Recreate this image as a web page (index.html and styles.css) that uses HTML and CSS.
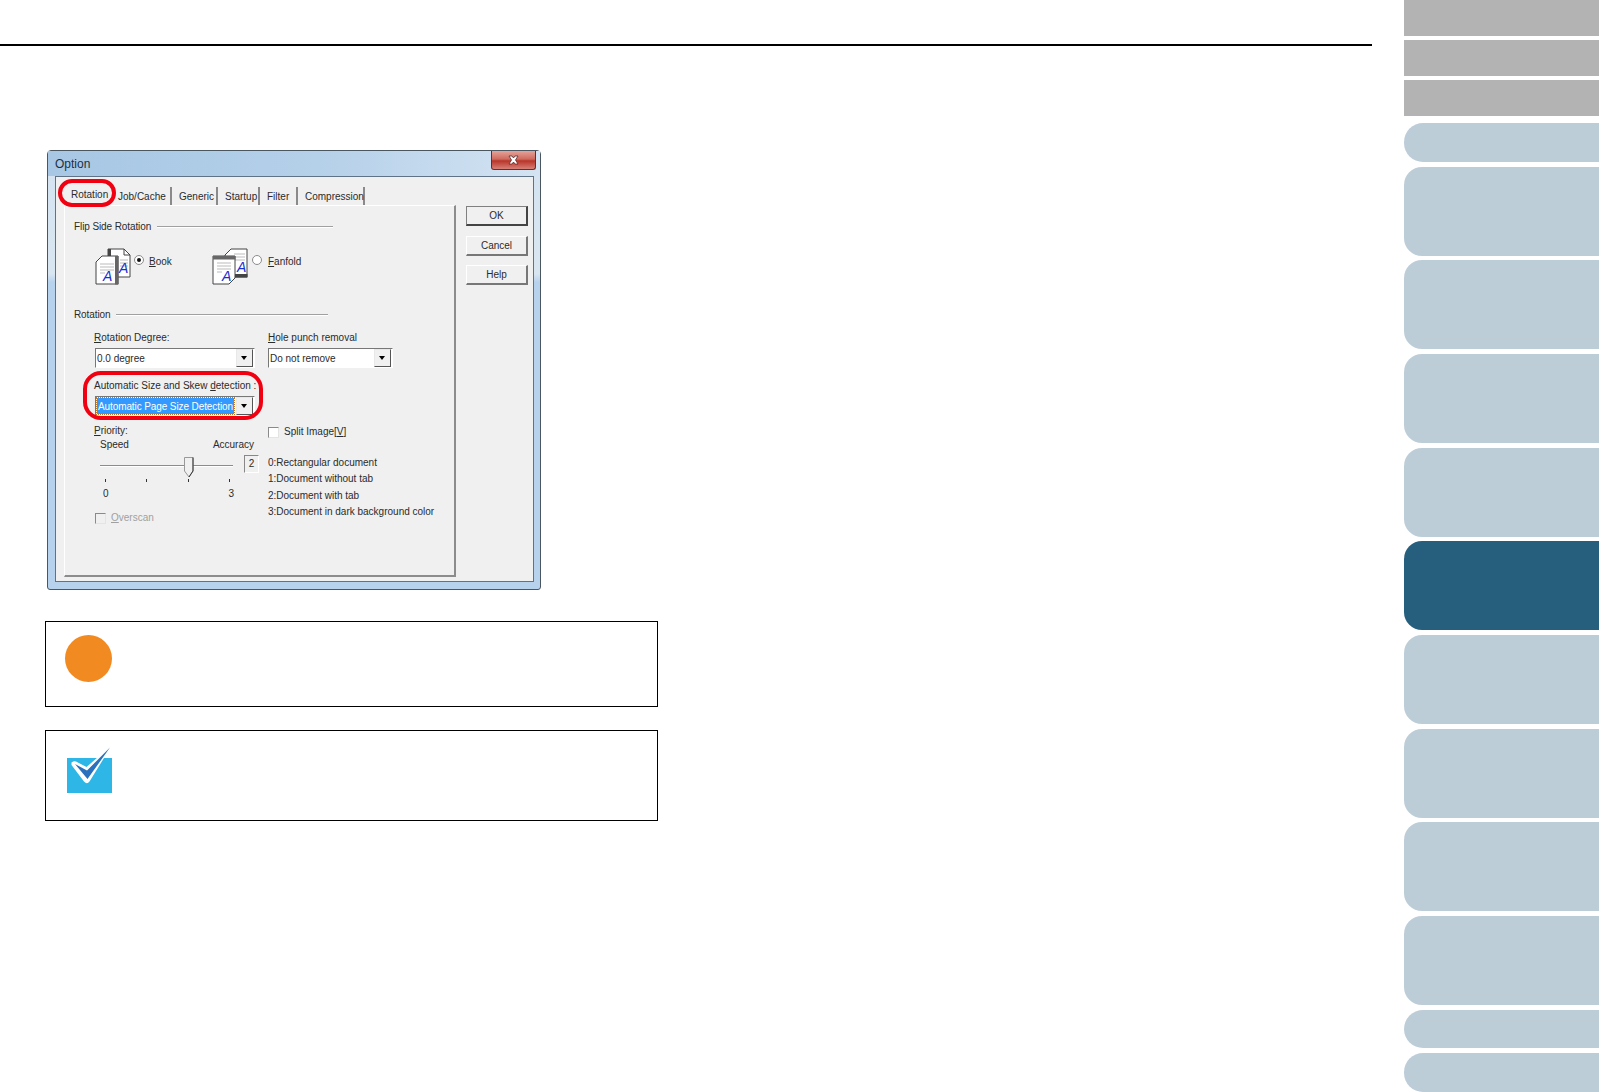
FILE: index.html
```html
<!DOCTYPE html>
<html lang="en">
<head>
    <meta charset="UTF-8">
    <meta name="viewport" content="width=device-width, initial-scale=1.0">
    <title>Option</title>
    <link rel="stylesheet" href="styles.css">
</head>
<body>
    <div class="page">
        <main class="content">
            <div class="top-rule"></div>

            <div class="dialog">
                <div class="title-bar">
                    <span class="title">Option</span>
                    <span class="close-btn">
                        <svg width="13" height="10" viewBox="0 0 13 10"><path d="M2 1h3l1.500 2 1.500-2h3L8.500 5 11 9H8L6.500 7 5 9H2l2.500-4z" fill="#fff" stroke="#5a2a2a" stroke-width="0.800"/></svg>
                    </span>
                </div>
                <div class="client">
                    <div class="tab-area">
                        <div class="tabs">
                            <span class="tab active">Rotation</span>
                            <span class="tab tab-job">Job/Cache</span>
                            <span class="tab tab-generic">Generic</span>
                            <span class="tab tab-startup">Startup</span>
                            <span class="tab tab-filter">Filter</span>
                            <span class="tab tab-compression">Compression</span>
                        </div>
                        <div class="tab-page">
                            <div class="legend legend-flip"><span>Flip Side Rotation</span><i></i></div>
                            <div class="flip-row">
                                <div class="flip-option option-book">
                                    <svg class="page-icon" width="36" height="37" viewBox="0 0 36 37">
                                        <path d="M13 1H29L35 7V29H13Z" fill="#fff" stroke="#444"/>
                                        <rect x="13" y="1" width="3" height="7" fill="#444"/>
                                        <path d="M29 1V7H35" fill="none" stroke="#444"/>
                                        <path d="M25 12H33M25 15H33M25 18H33" stroke="#bbb"/>
                                        <path d="M1 14L7 8H23V36H1Z" fill="#fff" stroke="#444"/>
                                        <rect x="20" y="8" width="3.500" height="28.500" fill="#666"/>
                                        <path d="M5 16H19M5 19H19M5 22H19M5 25H10" stroke="#bbb"/>
                                        <text class="icon-letter" x="24" y="25">A</text>
                                        <text class="icon-letter" x="8" y="33">A</text>
                                    </svg>
                                    <span class="radio checked"></span>
                                    <span class="flip-label"><u>B</u>ook</span>
                                </div>
                                <div class="flip-option option-fanfold">
                                    <svg class="page-icon" width="36" height="37" viewBox="0 0 36 37">
                                        <path d="M13 7L19 1H35V29H13Z" fill="#fff" stroke="#444"/>
                                        <rect x="23" y="26" width="12.500" height="3.500" fill="#444"/>
                                        <path d="M22 6H33M22 9H33M22 12H33" stroke="#bbb"/>
                                        <path d="M1 8H23V30L17 36H1Z" fill="#fff" stroke="#444"/>
                                        <rect x="1" y="8" width="22.500" height="3.500" fill="#666"/>
                                        <path d="M5 15H19M5 18H19M5 21H19M5 24H10" stroke="#bbb"/>
                                        <text class="icon-letter" x="25" y="24">A</text>
                                        <text class="icon-letter" x="10" y="33">A</text>
                                    </svg>
                                    <span class="radio"></span>
                                    <span class="flip-label"><u>F</u>anfold</span>
                                </div>
                            </div>

                            <div class="legend legend-rotation"><span>Rotation</span><i></i></div>
                            <div class="rotation-grid">
                                <div class="col-left">
                                    <label class="field-label"><u>R</u>otation Degree:</label>
                                    <div class="combo combo-wide"><span>0.0 degree</span><b class="combo-btn"></b></div>
                                    <label class="field-label label-auto">Automatic Size and Skew <u>d</u>etection :</label>
                                    <div class="combo combo-wide"><span class="selected">Automatic Page Size Detection</span><b class="combo-btn"></b></div>
                                    <label class="field-label label-priority"><u>P</u>riority:</label>
                                    <div class="speed-row"><span>Speed</span><span>Accuracy</span></div>
                                    <div class="slider-row">
                                        <div class="slider">
                                            <div class="track"></div>
                                            <svg class="thumb" width="10" height="21" viewBox="0 0 10 21"><path d="M.5.500H9V14L5 20 .5 14Z" fill="#f0f0f0" stroke="#999"/><path d="M9 .500V14L5 20" fill="none" stroke="#333"/></svg>
                                        </div>
                                        <span class="value-box">2</span>
                                    </div>
                                    <div class="ticks"><i></i><i></i><i></i><i></i></div>
                                    <div class="tick-labels"><span>0</span><span>3</span></div>
                                    <div class="check-row overscan"><span class="checkbox"></span><span><u>O</u>verscan</span></div>
                                </div>
                                <div class="col-right">
                                    <label class="field-label"><u>H</u>ole punch removal</label>
                                    <div class="combo combo-small"><span>Do not remove</span><b class="combo-btn"></b></div>
                                    <div class="check-row split"><span class="checkbox"></span><span>Split Image[<u>V</u>]</span></div>
                                    <ul class="doc-types">
                                        <li>0:Rectangular document</li>
                                        <li>1:Document without tab</li>
                                        <li>2:Document with tab</li>
                                        <li>3:Document in dark background color</li>
                                    </ul>
                                </div>
                            </div>
                        </div>
                    </div>
                    <div class="side-buttons">
                        <button class="default-btn">OK</button>
                        <button>Cancel</button>
                        <button>Help</button>
                    </div>
                </div>
                <div class="mark mark-tab"></div>
                <div class="mark mark-combo"></div>
            </div>

            <div class="note-box note-attention">
                <div class="attention-dot"></div>
            </div>
            <div class="note-box note-hint">
                <svg class="hint-icon" width="45" height="48" viewBox="0 0 45 48">
                    <rect y="13" width="45" height="35" fill="#2eb7e6"/>
                    <path d="M4.500 17.500Q7 15.500 9 16.500L19.500 22L45 0L22.500 36.500Q20 40 17 36.500L4.500 20Z" fill="#fff"/>
                    <path d="M8 19L20 25.500L43 2.500L20.500 34Z" fill="#2b70bc"/>
                </svg>
            </div>
        </main>

        <nav class="side-nav">
            <span class="nav-gray"></span>
            <span class="nav-gray"></span>
            <span class="nav-gray"></span>
            <span class="nav-small nav-first"></span>
            <span class="nav-tall"></span>
            <span class="nav-tall"></span>
            <span class="nav-tall"></span>
            <span class="nav-tall"></span>
            <span class="nav-tall active"></span>
            <span class="nav-tall"></span>
            <span class="nav-tall"></span>
            <span class="nav-tall"></span>
            <span class="nav-tall"></span>
            <span class="nav-small"></span>
            <span class="nav-small"></span>
        </nav>
    </div>
</body>
</html>
```

FILE: styles.css
```css
html, body {
    margin: 0;
    padding: 0;
    background-color: #fff;
}
.page {
    display: flex;
    height: 1092px;
    overflow: hidden;
    font-family: "Liberation Sans", Arial, sans-serif;
}
.content {
    width: 1372px;
    flex: none;
}
.top-rule {
    height: 2px;
    margin-top: 44px;
    background-color: #000;
}

/* dialog */
.dialog {
    position: relative;
    box-sizing: border-box;
    width: 494px;
    height: 440px;
    margin: 104px 0 0 47px;
    padding: 0 6px 7px 7px;
    border: 1px solid #4a5660;
    border-radius: 4px 4px 3px 3px;
    background: linear-gradient(to bottom, #d4e3f1 0, #d9e6f2 28%, #b6d2ec 30%, #b6d2ec 100%);
    font-size: 10px;
    line-height: 14px;
    color: #2b2b2b;
}
.title-bar {
    display: flex;
    justify-content: space-between;
    height: 25px;
    margin: 0 -6px 0 -7px;
    padding: 0 4px 0 7px;
    background: linear-gradient(to right, #a7c7e4, #b5d0e9 55%, #d3e3f2);
}
.title {
    font-size: 12px;
    line-height: 26px;
    color: #1d3040;
}
.close-btn {
    display: flex;
    align-items: center;
    justify-content: center;
    width: 43px;
    height: 18px;
    border: 1px solid #6b2b2b;
    border-top: none;
    border-radius: 0 0 3px 3px;
    background: linear-gradient(to bottom, #e5a39a, #cf6a5e 45%, #b8352a 55%, #d88076);
}
.client {
    display: flex;
    box-sizing: border-box;
    height: 406px;
    padding-left: 8px;
    border: 1px solid #5f7286;
    background-color: #f0f0f0;
}
.tab-area {
    width: 392px;
    flex: none;
}
.tabs {
    display: flex;
    height: 28px;
    align-items: flex-end;
}
.tab {
    box-sizing: border-box;
    height: 18px;
    padding-top: 3px;
    border-right: 2px solid #8a8a8a;
    white-space: nowrap;
}
.tab.active {
    width: 53px;
    padding-top: 1px;
    padding-left: 7px;
    border-right: none;
}
.tab-job { width: 55px; padding-left: 1px; }
.tab-generic { width: 46px; padding-left: 7px; }
.tab-startup { width: 42px; padding-left: 7px; }
.tab-filter { width: 38px; padding-left: 7px; }
.tab-compression { width: 67px; padding-left: 7px; }
.tab-page {
    box-sizing: border-box;
    height: 372px;
    padding-left: 9px;
    border-top: 1px solid #fff;
    border-left: 1px solid #fff;
    border-right: 2px solid #8c8c8c;
    border-bottom: 2px solid #8c8c8c;
}
.legend {
    display: flex;
    align-items: center;
    height: 16px;
}
.legend span {
    letter-spacing: -0.100px;
}
.legend i {
    height: 1px;
    margin-left: 6px;
    background-color: #a0a0a0;
    border-bottom: 1px solid #fff;
}
.legend-flip { margin-top: 13px; }
.legend-flip i { width: 176px; }
.legend-rotation { margin-top: 22px; }
.legend-rotation i { width: 212px; }
.flip-row {
    display: flex;
    height: 37px;
    margin: 13px 0 0 21px;
}
.flip-option {
    display: flex;
    align-items: flex-start;
}
.option-book { width: 117px; }
.page-icon { flex: none; }
.radio {
    position: relative;
    box-sizing: border-box;
    width: 10px;
    height: 10px;
    margin: 7px 4px 0 3px;
    border: 1px solid #8c8c8c;
    border-radius: 50%;
    background-color: #fff;
}
.radio.checked::after {
    content: "";
    position: absolute;
    top: 2px;
    left: 2px;
    width: 4px;
    height: 4px;
    border-radius: 50%;
    background-color: #111;
}
.option-fanfold .radio {
    margin: 7px 5px 0 4px;
}
.flip-label {
    margin: 7px 0 0 1px;
}
.rotation-grid {
    display: grid;
    grid-template-columns: 165px 1fr;
    gap: 8px;
    margin: 8px 0 0 21px;
}
.col-left, .col-right {
    display: flex;
    flex-direction: column;
}
.field-label {
    display: block;
    height: 14px;
    margin-left: -1px;
    white-space: nowrap;
}
.col-right .field-label {
    margin-left: 0;
}
.combo {
    display: flex;
    align-items: center;
    justify-content: space-between;
    box-sizing: border-box;
    height: 20px;
    margin-top: 3px;
    padding: 0 1px 0 0;
    border-top: 1px solid #777;
    border-left: 1px solid #777;
    border-right: 1px solid #fff;
    border-bottom: 1px solid #fff;
    background-color: #fff;
    white-space: nowrap;
}
.combo span {
    padding-top: 2px;
    margin-left: 1px;
}
.combo-wide { width: 160px; }
.combo-small { width: 125px; }
.combo .selected {
    flex: 1;
    margin-right: 2px;
    padding: 2px 0 0 1px;
    background-color: #3399ff;
    outline: 1px dotted #c8741c;
    letter-spacing: -0.100px;
    color: #fff;
    overflow: hidden;
}
.combo-btn {
    position: relative;
    flex: none;
    width: 15px;
    height: 16px;
    border-top: 1px solid #e8e8e8;
    border-left: 1px solid #e8e8e8;
    border-right: 1px solid #555;
    border-bottom: 1px solid #555;
    background-color: #f0f0f0;
}
.combo-btn::after {
    content: "";
    position: absolute;
    top: 6px;
    left: 4px;
    border-top: 4px solid #000;
    border-left: 3.500px solid transparent;
    border-right: 3.500px solid transparent;
}
.label-auto { margin-top: 11px; }
.label-priority { margin-top: 8px; }
.speed-row {
    display: flex;
    justify-content: space-between;
    width: 154px;
    margin-left: 5px;
}
.slider-row {
    display: flex;
    justify-content: space-between;
    height: 18px;
    margin-top: 3px;
}
.slider {
    position: relative;
    width: 133px;
    margin-left: 5px;
}
.track {
    height: 1px;
    margin-top: 10px;
    background-color: #8c8c8c;
    border-bottom: 1px solid #fff;
}
.thumb {
    position: absolute;
    top: 2px;
    left: 84px;
}
.value-box {
    box-sizing: border-box;
    width: 15px;
    height: 18px;
    margin-right: 1px;
    border: 1px solid #888;
    border-right-color: #fff;
    border-bottom-color: #fff;
    text-align: center;
    line-height: 16px;
}
.ticks {
    display: flex;
    justify-content: space-between;
    width: 125px;
    margin: 6px 0 0 10px;
}
.ticks i {
    width: 1px;
    height: 3px;
    background-color: #333;
}
.tick-labels {
    display: flex;
    justify-content: space-between;
    width: 131px;
    margin: 5px 0 0 8px;
}
.check-row {
    display: flex;
    align-items: center;
    height: 14px;
    white-space: nowrap;
}
.checkbox {
    box-sizing: border-box;
    width: 11px;
    height: 11px;
    margin-right: 5px;
    border: 1px solid #8a8a8a;
    border-right-color: #e4e4e4;
    border-bottom-color: #e4e4e4;
    background-color: #fff;
}
.overscan {
    margin-top: 10px;
    color: #a0a0a0;
}
.overscan .checkbox {
    background-color: #f0f0f0;
}
.split {
    margin-top: 57px;
}
.doc-types {
    margin: 17px 0 0;
    padding: 0;
    list-style: none;
}
.doc-types li {
    height: 16.300px;
    white-space: nowrap;
}
.side-buttons {
    display: flex;
    flex-direction: column;
    align-items: flex-end;
    width: 72px;
    padding-top: 29px;
}
.side-buttons button {
    box-sizing: border-box;
    width: 62px;
    height: 20px;
    margin-bottom: 9.500px;
    padding: 0;
    border: 1px solid #fff;
    border-right: 2px solid #777;
    border-bottom: 2px solid #777;
    background-color: #f0f0f0;
    font-family: inherit;
    font-size: 10px;
    color: #2b2b2b;
}
.side-buttons .default-btn {
    border: 1px solid #808080;
    border-right: 2px solid #444;
    border-bottom: 2px solid #444;
}

/* red highlights drawn over the screenshot */
.mark {
    position: absolute;
    box-sizing: border-box;
    border: 4px solid #f00010;
}
.mark-tab {
    top: 28px;
    left: 10px;
    width: 58px;
    height: 28px;
    border-radius: 14px;
}
.mark-combo {
    top: 220px;
    left: 35px;
    width: 180px;
    height: 49px;
    border-radius: 18px;
}

/* note boxes */
.note-box {
    box-sizing: border-box;
    width: 613px;
    margin-left: 45px;
    border: 1.500px solid #000;
}
.note-attention {
    height: 86px;
    margin-top: 31px;
    padding: 13px 0 0 19px;
}
.attention-dot {
    width: 47px;
    height: 47px;
    border-radius: 50%;
    background-color: #f28a22;
}
.note-hint {
    height: 91px;
    margin-top: 23px;
    padding: 14px 0 0 21px;
}
.hint-icon {
    display: block;
}

/* right hand navigation */
.side-nav {
    display: flex;
    flex-direction: column;
    width: 195px;
    margin-left: 32px;
    flex: none;
}
.side-nav span {
    display: block;
    flex: none;
    background-color: #bdcdd8;
}
.nav-gray {
    height: 36px;
    margin-bottom: 4px;
}
.side-nav .nav-gray {
    background-color: #b3b3b3;
}
.nav-tall {
    height: 89px;
    margin-bottom: 4.700px;
    border-radius: 18px 0 0 18px;
}
.nav-small {
    height: 38.500px;
    margin-bottom: 5px;
    border-radius: 19px 0 0 19px;
}
.nav-first {
    margin-top: 3px;
}
.side-nav .active {
    background-color: #265e7e;
}
.icon-letter {
    font-family: "Liberation Sans", sans-serif;
    font-size: 14px;
    font-style: italic;
    fill: #1a2fd0;
}
```
